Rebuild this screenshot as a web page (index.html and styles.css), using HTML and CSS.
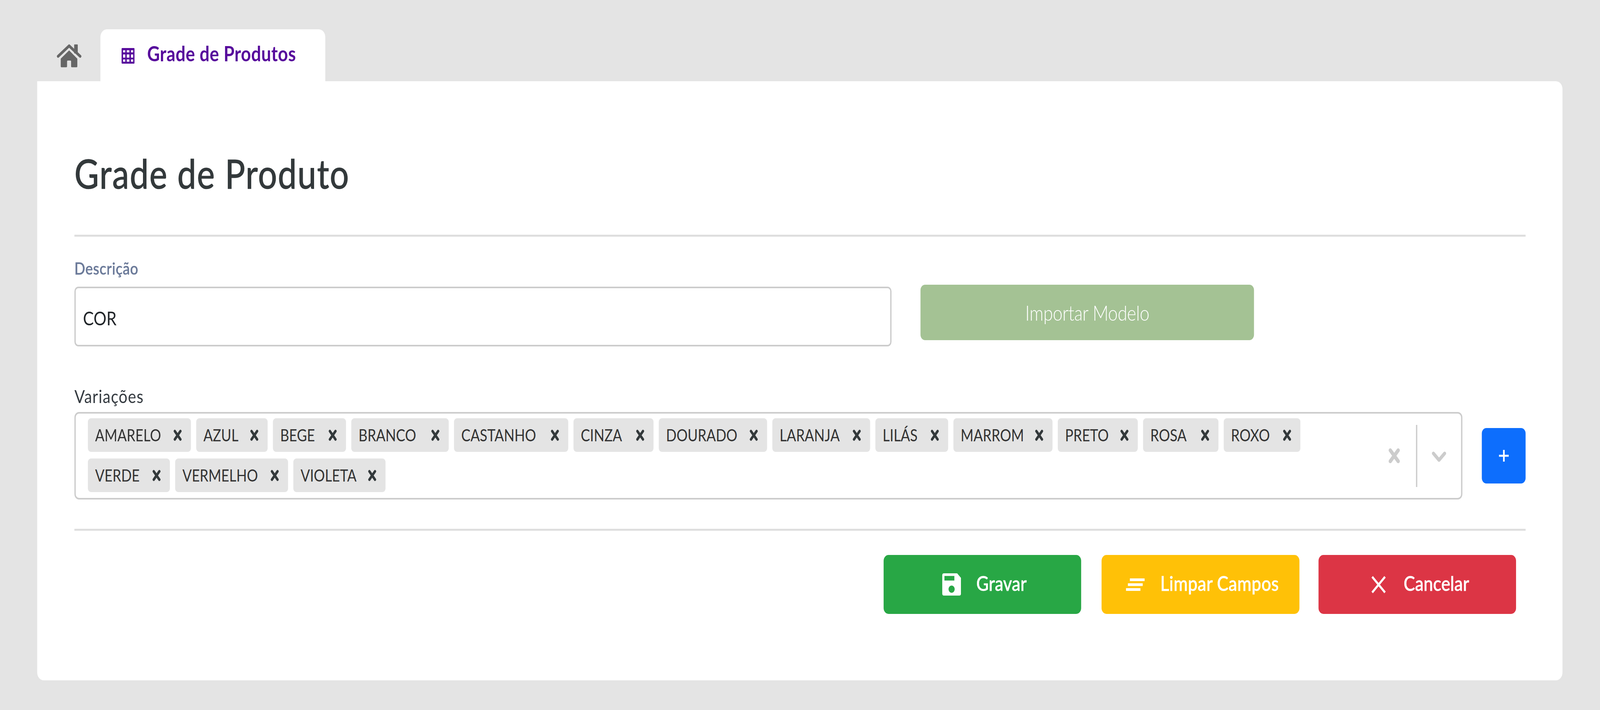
FILE: index.html
```html
<!DOCTYPE html>
<html lang="pt-BR">
<head>
<meta charset="utf-8">
<title>Grade de Produto</title>
<link rel="stylesheet" href="styles.css">
</head>
<body>
<div class="frame">
<div class="page">
  <nav class="tabs">
    <a class="home" aria-label="Início">
      <svg class="home-icon" viewBox="33 36 228 181">
        <rect x="193" y="38" width="33" height="70" rx="4" fill="#666"/>
        <polyline points="46,130 147,49 248,130" fill="none" stroke="#666" stroke-width="22" stroke-linecap="round" stroke-linejoin="round"/>
        <path fill="#666" d="M147 84 L222 148 V208 Q222 215 215 215 H172 Q165 215 165 208 V170 Q165 163 158 163 H135 Q128 163 128 170 V208 Q128 215 121 215 H77 Q70 215 70 208 V148 Z"/>
      </svg>
    </a>
    <div class="tab">
      <svg class="table-icon" viewBox="628 68 120 122">
        <rect x="628" y="68" width="120" height="122" rx="6" fill="#570a9c"/>
        <g fill="#fff">
          <rect x="642" y="85" width="20" height="17"/><rect x="676" y="85" width="24" height="17"/><rect x="715" y="85" width="20" height="17"/>
          <rect x="642" y="118" width="20" height="25"/><rect x="676" y="118" width="24" height="25"/><rect x="715" y="118" width="20" height="25"/>
          <rect x="642" y="157" width="20" height="18"/><rect x="676" y="157" width="24" height="18"/><rect x="715" y="157" width="20" height="18"/>
        </g>
      </svg>
      <span class="tab-label">Grade de Produtos</span>
    </div>
  </nav>

  <main class="card">
    <h1 class="title">Grade de Produto</h1>
    <div class="rule rule-top"></div>

    <div class="desc-row">
      <div class="desc-field">
        <label class="label-muted">Descrição</label>
        <div class="text-input">COR</div>
      </div>
      <button class="btn-import">Importar Modelo</button>
    </div>

    <label class="label-plain">Variações</label>
    <div class="select-row">
      <div class="select">
        <div class="values">
          <div class="chip"><span>AMARELO</span><svg class="chip-x" viewBox="0 0 25 29"><path d="M4 4 L21 25 M21 4 L4 25"/></svg></div>
          <div class="chip"><span>AZUL</span><svg class="chip-x" viewBox="0 0 25 29"><path d="M4 4 L21 25 M21 4 L4 25"/></svg></div>
          <div class="chip"><span>BEGE</span><svg class="chip-x" viewBox="0 0 25 29"><path d="M4 4 L21 25 M21 4 L4 25"/></svg></div>
          <div class="chip"><span>BRANCO</span><svg class="chip-x" viewBox="0 0 25 29"><path d="M4 4 L21 25 M21 4 L4 25"/></svg></div>
          <div class="chip"><span>CASTANHO</span><svg class="chip-x" viewBox="0 0 25 29"><path d="M4 4 L21 25 M21 4 L4 25"/></svg></div>
          <div class="chip"><span>CINZA</span><svg class="chip-x" viewBox="0 0 25 29"><path d="M4 4 L21 25 M21 4 L4 25"/></svg></div>
          <div class="chip"><span>DOURADO</span><svg class="chip-x" viewBox="0 0 25 29"><path d="M4 4 L21 25 M21 4 L4 25"/></svg></div>
          <div class="chip"><span>LARANJA</span><svg class="chip-x" viewBox="0 0 25 29"><path d="M4 4 L21 25 M21 4 L4 25"/></svg></div>
          <div class="chip"><span>LILÁS</span><svg class="chip-x" viewBox="0 0 25 29"><path d="M4 4 L21 25 M21 4 L4 25"/></svg></div>
          <div class="chip"><span>MARROM</span><svg class="chip-x" viewBox="0 0 25 29"><path d="M4 4 L21 25 M21 4 L4 25"/></svg></div>
          <div class="chip"><span>PRETO</span><svg class="chip-x" viewBox="0 0 25 29"><path d="M4 4 L21 25 M21 4 L4 25"/></svg></div>
          <div class="chip"><span>ROSA</span><svg class="chip-x" viewBox="0 0 25 29"><path d="M4 4 L21 25 M21 4 L4 25"/></svg></div>
          <div class="chip"><span>ROXO</span><svg class="chip-x" viewBox="0 0 25 29"><path d="M4 4 L21 25 M21 4 L4 25"/></svg></div>
          <div class="chip"><span>VERDE</span><svg class="chip-x" viewBox="0 0 25 29"><path d="M4 4 L21 25 M21 4 L4 25"/></svg></div>
          <div class="chip"><span>VERMELHO</span><svg class="chip-x" viewBox="0 0 25 29"><path d="M4 4 L21 25 M21 4 L4 25"/></svg></div>
          <div class="chip"><span>VIOLETA</span><svg class="chip-x" viewBox="0 0 25 29"><path d="M4 4 L21 25 M21 4 L4 25"/></svg></div>
        </div>
        <div class="indicators">
          <svg class="clear-x" viewBox="0 0 36 40"><path d="M6 6 L30 34 M30 6 L6 34"/></svg>
          <div class="sep"></div>
          <svg class="chevron" viewBox="0 0 44 27"><polyline points="5,5 22,22 39,5"/></svg>
        </div>
      </div>
      <button class="btn-add" aria-label="Adicionar">
        <svg class="plus" viewBox="0 0 30 30"><path d="M15 0 V30 M0 15 H30"/></svg>
      </button>
    </div>

    <div class="rule rule-bottom"></div>

    <div class="actions">
      <button class="btn btn-save">
        <svg class="btn-icon" viewBox="30 25 170 170"><path fill="#fff" fill-rule="evenodd" d="M46 25 H165 L200 60 V179 Q200 195 184 195 H46 Q30 195 30 179 V41 Q30 25 46 25 Z M50 45 V80 H140 V45 Z M115 118 A28 28 0 1 0 115 174 A28 28 0 1 0 115 118 Z"/></svg>
        <span>Gravar</span>
      </button>
      <button class="btn btn-clear">
        <svg class="btn-icon" viewBox="0 0 57 32"><g fill="#fff"><rect x="12" y="0" width="45" height="7"/><rect x="6" y="12.5" width="45" height="7"/><rect x="0" y="25" width="44" height="7"/></g></svg>
        <span>Limpar Campos</span>
      </button>
      <button class="btn btn-cancel">
        <svg class="btn-icon" viewBox="0 0 57 44"><path d="M9 2 L48 42 M48 2 L9 42" stroke="#fff" stroke-width="6" fill="none"/></svg>
        <span>Cancelar</span>
      </button>
    </div>
  </main>
</div>
</div>
</body>
</html>
```

FILE: styles.css
```css
* { box-sizing: border-box; }

html, body {
  margin: 0;
  background: #e4e4e4;
}

body {
  font-family: "Lato", "Liberation Sans", sans-serif;
  color: #343a40;
}

.frame {
  width: 100%;
  height: 1818px;
  overflow: hidden;
}

.page {
  display: flex;
  flex-direction: column;
  width: 4859px;
  height: 1818px;
  padding-top: 75px;
}

/* The browser caps the window below the design width: fit the design to it. */
@media (max-width: 4200px) {
  .page {
    width: 4858px;
    transform: scaleX(0.8428);
    transform-origin: 0 0;
  }
}

/* Tabs */
.tabs {
  display: flex;
  align-items: flex-start;
  height: 133px;
  padding-left: 172px;
}

.home {
  display: block;
  margin-top: 38px;
  margin-right: 57px;
}

.home-icon {
  display: block;
  width: 76px;
  height: 60px;
}

.tab {
  display: flex;
  align-items: flex-start;
  width: 683px;
  height: 133px;
  padding: 30px 0 0 64px;
  background: #fff;
  border-radius: 20px 20px 0 0;
}

.table-icon {
  width: 40px;
  height: 40px;
  margin-top: 18px;
  margin-right: 38px;
  flex: none;
}

.tab-label {
  font-size: 53px;
  line-height: 64px;
  font-weight: 700;
  color: #570a9c;
  letter-spacing: 0.6px;
  white-space: nowrap;
}

/* Card */
.card {
  margin: 0 112px 0 113px;
  height: 1534px;
  padding: 176px 112px 0 113px;
  background: #fff;
  border-radius: 0 20px 20px 20px;
}

.title {
  margin: 0;
  font-size: 102px;
  line-height: 120px;
  font-weight: 400;
  color: #33393b;
  letter-spacing: 2.5px;
  -webkit-text-stroke: 1.5px #33393b;
  white-space: nowrap;
}

.rule {
  height: 5px;
  background: #dedede;
}

.rule-top { margin-top: 97px; }
.rule-bottom { margin-top: 75px; }

/* Description row */
.desc-row {
  display: flex;
  align-items: flex-start;
  margin-top: 55px;
}

.desc-field {
  width: 2482px;
  flex: none;
}

.label-muted {
  display: block;
  height: 73px;
  font-size: 43px;
  line-height: 52px;
  font-weight: 500;
  letter-spacing: 0.8px;
  -webkit-text-stroke: 0.6px #6b7a99;
  color: #6b7a99;
}

.text-input {
  display: flex;
  align-items: center;
  height: 153px;
  padding: 7px 0 0 22px;
  font-size: 49px;
  color: #212529;
  background: #fff;
  border: 4px solid #ccc;
  border-radius: 12px;
}

.btn-import {
  width: 1013px;
  height: 142px;
  margin: 68px 0 0 88px;
  font-family: inherit;
  font-size: 53px;
  font-weight: 300;
  letter-spacing: -0.5px;
  color: #fff;
  background: #a4c294;
  border: 0;
  border-radius: 14px;
}

/* Variations */
.label-plain {
  display: block;
  height: 56px;
  margin-top: 99px;
  margin-bottom: 13px;
  font-size: 47px;
  line-height: 56px;
  letter-spacing: 1.5px;
  color: #343a40;
}

.select-row {
  display: flex;
  align-items: center;
  justify-content: space-between;
}

.select {
  display: flex;
  width: 4216px;
  height: 224px;
  flex: none;
  background: #fff;
  border: 4px solid #ccc;
  border-radius: 14px;
}

.values {
  display: flex;
  flex-wrap: wrap;
  align-content: flex-start;
  gap: 17px 16px;
  flex: 1;
  padding: 12px 46px 0 37px;
}

.chip {
  display: flex;
  align-items: center;
  justify-content: space-between;
  height: 86px;
  padding: 0 28px 0 22px;
  font-size: 42px;
  color: #333;
  background: #e4e4e4;
  border-radius: 9px;
}

.chip:nth-child(1) { width: 313px; }
.chip:nth-child(2) { width: 217px; }
.chip:nth-child(3) { width: 222px; }
.chip:nth-child(4) { width: 296px; }
.chip:nth-child(5) { width: 347px; }
.chip:nth-child(6) { width: 243px; }
.chip:nth-child(7) { width: 329px; }
.chip:nth-child(8) { width: 297px; }
.chip:nth-child(9) { width: 221px; }
.chip:nth-child(10) { width: 301px; }
.chip:nth-child(11) { width: 243px; }
.chip:nth-child(12) { width: 229px; }
.chip:nth-child(13) { width: 233px; }
.chip:nth-child(14) { width: 249px; }
.chip:nth-child(15) { width: 343px; }
.chip:nth-child(16) { width: 280px; }

.chip-x {
  width: 25px;
  height: 29px;
  flex: none;
  fill: none;
  stroke: #33393b;
  stroke-width: 7;
  stroke-linecap: round;
}

.indicators {
  display: flex;
  align-items: center;
  flex: none;
  padding-right: 45px;
}

.clear-x {
  width: 36px;
  height: 40px;
  fill: none;
  stroke: #ccc;
  stroke-width: 10;
  stroke-linecap: round;
}

.sep {
  width: 4px;
  height: 159px;
  margin: 0 44px 0 48px;
  background: #ccc;
}

.chevron {
  width: 44px;
  height: 27px;
  margin-top: 5px;
  fill: none;
  stroke: #ccc;
  stroke-width: 9;
  stroke-linecap: round;
  stroke-linejoin: round;
}

.btn-add {
  display: flex;
  align-items: center;
  justify-content: center;
  width: 133px;
  height: 142px;
  padding: 0;
  background: #0d6efd;
  border: 0;
  border-radius: 14px;
}

.plus {
  width: 30px;
  height: 30px;
  fill: none;
  stroke: #fff;
  stroke-width: 5;
}

/* Actions */
.actions {
  display: flex;
  justify-content: flex-end;
  margin-top: 62px;
  padding-right: 29px;
}

.btn {
  display: flex;
  align-items: center;
  justify-content: center;
  gap: 47px;
  width: 600px;
  height: 151px;
  padding: 0 0 0 12px;
  font-family: inherit;
  font-size: 52px;
  font-weight: 500;
  -webkit-text-stroke: 0.7px #fff;
  color: #fff;
  border: 0;
  border-radius: 15px;
}

.btn span {
  margin-bottom: 7px;
}

.btn-icon {
  width: 57px;
  flex: none;
}

.btn-save { background: #28a745; margin-right: 62px; }
.btn-clear { background: #ffc107; margin-right: 58px; width: 601px; letter-spacing: 0.5px; }
.btn-cancel { background: #dc3545; }
```
